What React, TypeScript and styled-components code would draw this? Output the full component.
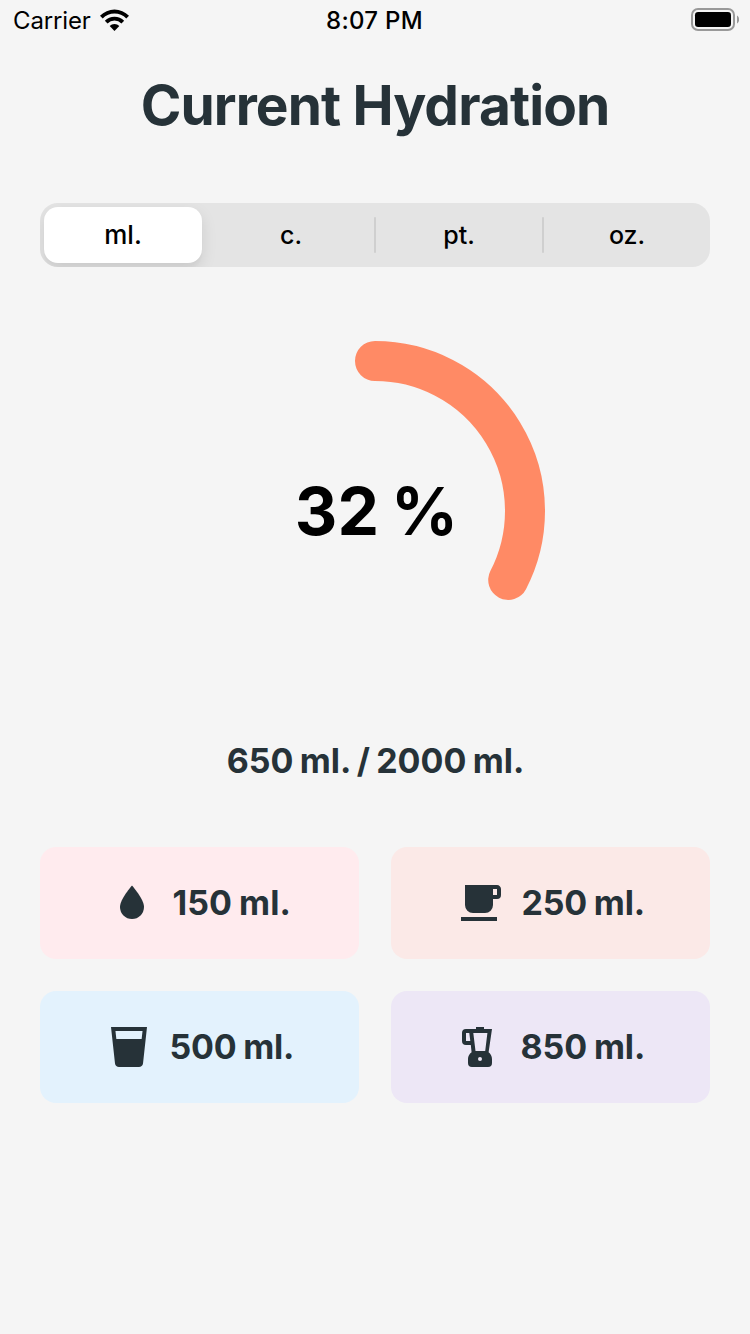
import React from "react";
import styled, { createGlobalStyle } from "styled-components";

const GlobalStyle = createGlobalStyle`
  * { box-sizing: border-box; }
  body {
    margin: 0;
    background: #f5f5f5;
    font-family: Inter, "Liberation Sans", sans-serif;
    color: #263238;
  }
`;

const Screen = styled.main`
  display: flex;
  flex-direction: column;
  width: 750px;
  height: 1334px;
  background: #f5f5f5;
  overflow: hidden;
`;

const StatusBar = styled.header`
  display: grid;
  grid-template-columns: 1fr auto 1fr;
  align-items: center;
  height: 40px;
  padding: 0 11px 0 13px;
  color: #000;
  font-size: 24px;
  line-height: 40px;
`;

const Carrier = styled.div`
  display: flex;
  align-items: center;
  gap: 9px;
  letter-spacing: -0.15px;

  > span { padding-top: 2px; line-height: 38px; }
`;

const Clock = styled.time`
  padding: 2px 3px 0 0;
  line-height: 38px;
  font-weight: 500;
  font-size: 24px;
  letter-spacing: 0.3px;
`;

const BatterySlot = styled.div`
  display: flex;
  justify-content: flex-end;
`;

const Title = styled.h1`
  margin: 31px 0 0;
  height: 68px;
  font-size: 55px;
  line-height: 68px;
  font-weight: 700;
  text-align: center;
  letter-spacing: -0.9px;
`;

const Segments = styled.div`
  display: grid;
  grid-template-columns: 166px repeat(3, 168px);
  grid-template-rows: 64px;
  height: 64px;
  margin: 64px 40px 0;
  border-radius: 18px;
  background: #e4e4e4;
  overflow: hidden;
`;

const Segment = styled.button<{ $active?: boolean; $divided?: boolean }>`
  display: flex;
  align-items: center;
  justify-content: center;
  position: relative;
  margin: ${(p) => (p.$active ? "4px" : "0")};
  padding: 0 0 0 ${(p) => (p.$active ? "0" : "2px")};
  border: 0;
  border-radius: ${(p) => (p.$active ? "14px" : "0")};
  background: ${(p) => (p.$active ? "#fff" : "transparent")};
  box-shadow: ${(p) => (p.$active ? "0 6px 16px rgba(0,0,0,0.1), 0 6px 2px rgba(0,0,0,0.02)" : "none")};
  color: #000;
  font: 500 25px/32px Inter, "Liberation Sans", sans-serif;
  font-size: ${(p) => (p.$active ? "26px" : "25px")};
  font-weight: ${(p) => (p.$active ? 500 : 450)};

  &::before {
    content: "";
    display: ${(p) => (p.$divided ? "block" : "none")};
    position: absolute;
    left: 0;
    top: 14px;
    width: 2px;
    height: 36px;
    border-radius: 1px;
    background: #cfcfcf;
  }
`;

const Gauge = styled.section`
  display: grid;
  place-items: center;
  width: 340px;
  height: 340px;
  margin: 74px auto 0;

  > * { grid-area: 1 / 1; }
`;

const Percent = styled.div`
  padding-left: 3px;
  color: #000;
  font-size: 66px;
  line-height: 80px;
  font-weight: 700;
  letter-spacing: 0.2px;
  word-spacing: -4px;
  white-space: nowrap;
`;

const Total = styled.p`
  margin: 60px 0 0;
  padding-left: 1px;
  height: 40px;
  font-size: 34px;
  line-height: 40px;
  font-weight: 700;
  letter-spacing: 0;
  word-spacing: -1.7px;
  text-align: center;
`;

const Buttons = styled.section`
  display: grid;
  grid-template-columns: 319px 319px;
  grid-auto-rows: 112px;
  gap: 32px;
  margin: 66px 40px 0;
`;

const DrinkButton = styled.button<{ $color: string; $start: number }>`
  display: flex;
  align-items: center;
  padding: 0 0 0 ${(p) => p.$start}px;
  border: 0;
  border-radius: 16px;
  background: ${(p) => p.$color};
  color: #263238;
`;

const DrinkLabel = styled.span<{ $tracking: number }>`
  margin: 0 0 1px 16.5px;
  font: 700 34px/40px Inter, "Liberation Sans", sans-serif;
  letter-spacing: ${(p) => p.$tracking}px;
  word-spacing: -1px;
  white-space: nowrap;
`;

const WifiIcon = () => (
  <svg width="29" height="22" viewBox="0 0 30 22" preserveAspectRatio="none">
    <path d="M0 6.7A21.4 21.4 0 0 1 30 6.7L27.2 9.5A17.3 17.3 0 0 0 2.8 9.5Z" />
    <path d="M5 11.8A14.2 14.2 0 0 1 25 11.8L22.2 14.6A10.2 10.2 0 0 0 7.8 14.6Z" />
    <path d="M10 17A7 7 0 0 1 20 17L15 22Z" />
  </svg>
);

const BatteryIcon = () => (
  <svg width="48" height="24" viewBox="0 0 48 24">
    <rect x="1" y="1" width="42" height="21" rx="6" fill="none" stroke="#999" strokeWidth="2" />
    <rect x="4" y="4" width="36" height="15" rx="3.2" />
    <path d="M46 7.5C48.8 9 48.8 14 46 15.5Z" fill="#999" />
  </svg>
);

const Progress = ({ value }: { value: number }) => {
  const angle = value * 2 * Math.PI;
  const x = 170 + 150 * Math.sin(angle);
  const y = 170 - 150 * Math.cos(angle);
  return (
    <svg width="340" height="340" viewBox="0 0 340 340">
      <path
        d={`M170 20A150 150 0 0 1 ${x} ${y}`}
        fill="none"
        stroke="#ff8a65"
        strokeWidth="40"
        strokeLinecap="round"
      />
    </svg>
  );
};

const icons = {
  water: "M12 20A6 6 0 0 1 6 14C6 10 12 3.25 12 3.25C12 3.25 18 10 18 14A6 6 0 0 1 12 20Z",
  coffee:
    "M2 21H20V19H2M20 8H18V5H20M20 3H4V13A4 4 0 0 0 8 17H14A4 4 0 0 0 18 13V10H20A2 2 0 0 0 22 8V5C22 3.89 21.1 3 20 3Z",
  cup: "M18.32 8H5.67L5.23 4H18.77M3 2L5 20.23C5.13 21.23 5.97 22 7 22H17C18 22 18.87 21.23 19 20.23L21 2H3Z",
  blender:
    "M10 2V3H5A2 2 0 0 0 3 5V9A2 2 0 0 0 5 11H7.4L7.8 14.6C6.7 15.4 6 16.6 6 18V20A2 2 0 0 0 8 22H16A2 2 0 0 0 18 20V18C18 16.6 17.3 15.4 16.3 14.6L18 3H14V2ZM5 5H6.65L7.15 9H5ZM8.65 5H15.7L14.6 14H9.75ZM12 17A1 1 0 1 1 12 19A1 1 0 1 1 12 17Z",
};

const Icon = ({ name }: { name: keyof typeof icons }) => (
  <svg width="48" height="48" viewBox="0 0 24 24" fill="#263238" fillRule="evenodd">
    <path d={icons[name]} />
  </svg>
);

const drinks: { icon: keyof typeof icons; label: string; color: string; start: number; tracking: number }[] = [
  { icon: "water", label: "150 ml.", color: "#ffebee", start: 68, tracking: 0.05 },
  { icon: "coffee", label: "250 ml.", color: "#fbe9e7", start: 66, tracking: -0.2 },
  { icon: "cup", label: "500 ml.", color: "#e3f2fd", start: 65, tracking: -0.25 },
  { icon: "blender", label: "850 ml.", color: "#ede7f6", start: 65, tracking: -0.1 },
];

export default function App() {
  return (
    <>
      <GlobalStyle />
      <Screen>
        <StatusBar>
          <Carrier>
            <span>Carrier</span>
            <WifiIcon />
          </Carrier>
          <Clock>8:07 PM</Clock>
          <BatterySlot>
            <BatteryIcon />
          </BatterySlot>
        </StatusBar>
        <Title>Current Hydration</Title>
        <Segments>
          <Segment $active>ml.</Segment>
          <Segment>c.</Segment>
          <Segment $divided>pt.</Segment>
          <Segment $divided>oz.</Segment>
        </Segments>
        <Gauge>
          <Progress value={0.326} />
          <Percent>32 %</Percent>
        </Gauge>
        <Total>650 ml. / 2000 ml.</Total>
        <Buttons>
          {drinks.map((d) => (
            <DrinkButton key={d.icon} $color={d.color} $start={d.start}>
              <Icon name={d.icon} />
              <DrinkLabel $tracking={d.tracking}>{d.label}</DrinkLabel>
            </DrinkButton>
          ))}
        </Buttons>
      </Screen>
    </>
  );
}
